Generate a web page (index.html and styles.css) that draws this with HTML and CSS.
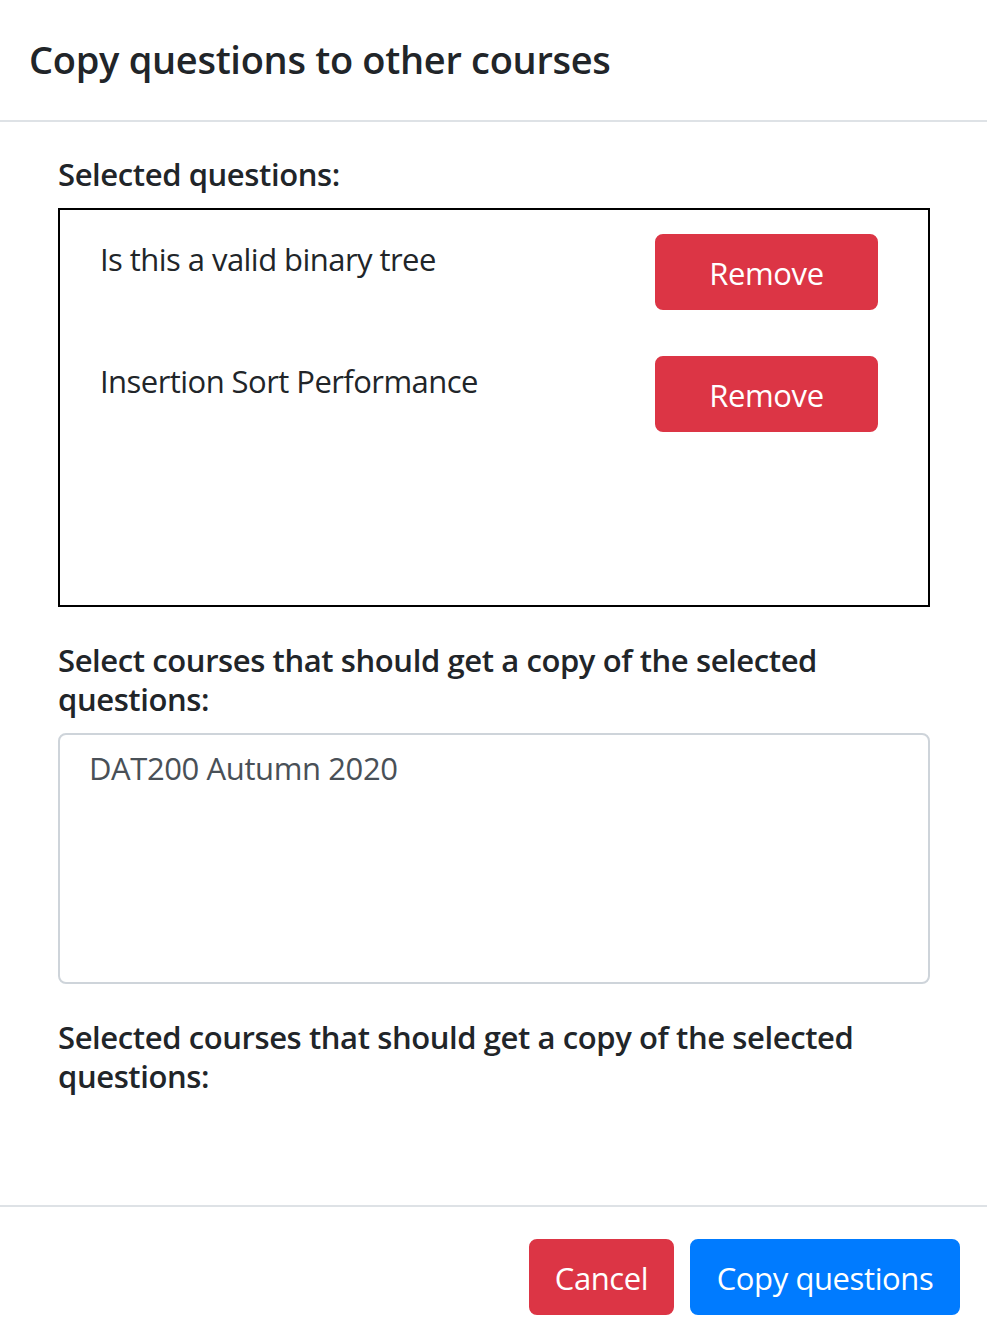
FILE: index.html
```html
<!DOCTYPE html>
<html lang="en">
<head>
<meta charset="utf-8">
<title>Copy questions to other courses</title>
<link rel="stylesheet" href="styles.css">
</head>
<body>
<div class="modal">
  <header class="modal-header">
    <h5 class="modal-title">Copy questions to other courses</h5>
  </header>
  <div class="modal-body">
    <h6 class="label label-first">Selected questions:</h6>
    <div class="selected-box">
      <div class="q-row">
        <span class="q-text">Is this a valid binary tree</span>
        <button class="btn btn-danger btn-remove">Remove</button>
      </div>
      <div class="q-row">
        <span class="q-text">Insertion Sort Performance</span>
        <button class="btn btn-danger btn-remove">Remove</button>
      </div>
    </div>
    <h6 class="label">Select courses that should get a copy of the selected questions:</h6>
    <div class="course-select">
      <div class="option">DAT200 Autumn 2020</div>
    </div>
    <h6 class="label">Selected courses that should get a copy of the selected questions:</h6>
  </div>
  <footer class="modal-footer">
    <button class="btn btn-danger btn-cancel">Cancel</button>
    <button class="btn btn-primary btn-copy">Copy questions</button>
  </footer>
</div>
</body>
</html>
```
FILE: styles.css
```css
* { box-sizing: border-box; }
html, body {
  margin: 0;
  padding: 0;
  background: #fff;
}
body {
  font-family: "Open Sans", "Noto Sans", sans-serif;
  color: #212529;
  font-size: 31px;
  letter-spacing: -0.4px;
  line-height: 1.5;
}
.modal {
  width: 987px;
  height: 1339px;
  display: flex;
  flex-direction: column;
}
.modal-header {
  height: 122px;
  padding: 31px 29px 0;
  border-bottom: 2px solid #dee2e6;
}
.modal-title {
  margin: 0;
  font-size: 38px;
  font-weight: 600;
  letter-spacing: -0.3px;
  line-height: 57px;
}
.modal-body {
  height: 1083px;
  padding: 0 57px 0 58px;
}
.label {
  margin: 34px 0 15px;
  font-size: 31px;
  font-weight: 600;
  letter-spacing: -0.4px;
  line-height: 38.4px;
}
.label-first {
  margin-top: 33px;
  margin-bottom: 15px;
}
.selected-box {
  height: 399px;
  border: 2px solid #000;
  padding: 24px 50px 0 40px;
  display: flex;
  flex-direction: column;
  gap: 46px;
}
.q-row {
  display: flex;
  align-items: flex-start;
  justify-content: space-between;
}
.q-text {
  line-height: 48px;
  font-weight: 400;
  padding-top: 1px;
  letter-spacing: -0.55px;
}
.btn {
  font-family: inherit;
  font-size: 31px;
  letter-spacing: -0.4px;
  line-height: 48px;
  height: 76px;
  border: 2px solid transparent;
  border-radius: 8px;
  color: #fff;
  display: inline-flex;
  align-items: center;
  justify-content: center;
  padding: 2px 0 0;
  cursor: pointer;
}
.btn-danger {
  background: #dc3545;
  border-color: #dc3545;
}
.btn-primary {
  background: #007bff;
  border-color: #007bff;
}
.btn-remove {
  width: 223px;
}
.course-select {
  height: 251px;
  border: 2px solid #ced4da;
  border-radius: 8px;
  padding: 10px 29px;
  color: #495057;
}
.modal-footer {
  flex: 1;
  border-top: 2px solid #dee2e6;
  padding: 32px 27px 0;
  display: flex;
  justify-content: flex-end;
  align-items: flex-start;
  gap: 16px;
}
.btn-cancel { width: 145px; }
.btn-copy { width: 270px; }
```
